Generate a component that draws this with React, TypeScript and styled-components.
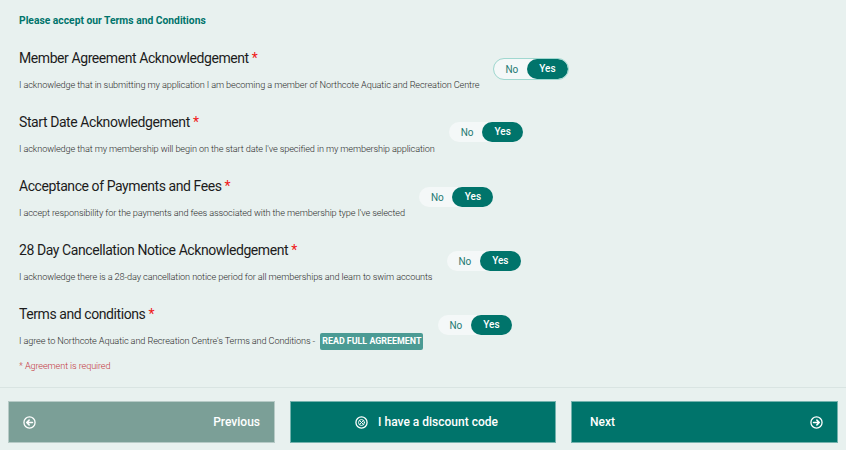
import React from "react";
import styled, { createGlobalStyle } from "styled-components";

const Global = createGlobalStyle`
  html, body { margin: 0; padding: 0; background: #e8f1ef; }
  body { font-family: Roboto, "Liberation Sans", sans-serif; overflow: hidden; }
`;
const Page = styled.div`
  width: 846px; height: 450px; display: flex; flex-direction: column; background: #e8f1ef; overflow: hidden;
`;
const Form = styled.div`
  height: 388px; box-sizing: border-box; padding: 15px 19px 0; border-bottom: 1px solid #d9e4e2;
`;
const Heading = styled.h2`
  margin: 0 0 19px; font-size: 10.3px; line-height: 12px; font-weight: 700; color: #00746b;
`;
const Row = styled.div`
  display: flex; align-items: flex-start; gap: 14.5px; height: 64px;
`;
const Text = styled.div`
  display: flex; flex-direction: column;
`;
const Title = styled.div`
  font-size: 14px; letter-spacing: -0.42px; line-height: 20px; color: #1c1c1c; height: 30px; padding-top: 2px; box-sizing: border-box;
`;
const Star = styled.span`
  color: #f01818;
`;
const Desc = styled.div`
  font-size: 9.2px; letter-spacing: -0.13px; line-height: 18px; font-weight: 300; color: #2b2b2b; display: flex; align-items: center; white-space: pre;
`;
const ReadLink = styled.a`
  margin-left: 3px; background: #4b9b94; color: #fff; font-size: 8.9px; letter-spacing: 0; font-weight: 700; line-height: 17px;
  padding: 0 2px; border-radius: 2px;
`;
const ErrorText = styled.div`
  font-size: 9.2px; letter-spacing: -0.13px; font-weight: 300; line-height: 14px; color: #c4353c; margin-top: 9px;
`;
const Toggle = styled.div<{ $outlined?: boolean; $top: number }>`
  margin-top: ${p => p.$top}px; display: flex; align-items: stretch; flex: none; width: 74px; height: 20px;
  border-radius: 10px; background: #f4f8f8; box-sizing: content-box;
  ${p => p.$outlined ? "outline: 1px solid #a0d8d0;" : ""}
`;
const No = styled.span`
  width: 33px; text-align: center; padding-left: 3px; box-sizing: border-box; font-size: 10px; line-height: 22px; color: #1f7a73;
`;
const Yes = styled.span`
  flex: 1; background: #00746b; border-radius: 10px; color: #fff; text-align: center; font-size: 10px; font-weight: 500; line-height: 19px;
`;
const Footer = styled.div`
  display: grid; grid-template-columns: 267px 266px 267px; gap: 15px; padding: 13px 8px 0 8px;
`;
const NavButton = styled.button<{ $muted?: boolean; $justify: string; $left: number }>`
  height: 42px; border: 1px solid rgba(255, 255, 255, 0.45); background: ${p => p.$muted ? "#7b9f97" : "#00746b"}; color: #fff;
  font-family: inherit; font-size: 12px; font-weight: 500; padding: 0 14px 0 ${p => p.$left}px; display: flex; align-items: center;
  justify-content: ${p => p.$justify}; box-sizing: border-box; gap: 10px;
`;
const Ic = styled.svg`
  width: 13px; height: 13px; fill: none; stroke: #fff; stroke-width: 1.4; stroke-linecap: round; stroke-linejoin: round; flex: none;
`;

const Arrow = ({ dir }: { dir: "left" | "right" }) => (
  <Ic viewBox="0 0 14 14">
    <circle cx="7" cy="7" r="6" />
    {dir === "left"
      ? <path d="M10.2 7H4M6.6 4.4 4 7l2.6 2.6" strokeWidth="1.7" />
      : <path d="M3.8 7H10M7.4 4.4 10 7 7.4 9.6" strokeWidth="1.7" />}
  </Ic>
);
const Discount = () => (
  <Ic viewBox="0 0 14 14">
    <circle cx="7" cy="7" r="6" />
    <circle cx="7" cy="7" r="3.2" strokeWidth="1" />
    <path d="M5 5l4 4M9 5 5 9" strokeWidth="1" />
  </Ic>
);

const YesNo = ({ top, outlined }: { top: number; outlined?: boolean }) => (
  <Toggle $top={top} $outlined={outlined}><No>No</No><Yes>Yes</Yes></Toggle>
);

const items = [
  { t: "Member Agreement Acknowledgement", d: "I acknowledge that in submitting my application I am becoming a member of Northcote Aquatic and Recreation Centre", top: 13, outlined: true },
  { t: "Start Date Acknowledgement", d: "I acknowledge that my membership will begin on the start date I've specified in my membership application", top: 12 },
  { t: "Acceptance of Payments and Fees", d: "I accept responsibility for the payments and fees associated with the membership type I've selected", top: 13 },
  { t: "28 Day Cancellation Notice Acknowledgement", d: "I acknowledge there is a 28-day cancellation notice period for all memberships and learn to swim accounts", top: 13 },
];

export default function App() {
  return (
    <Page>
      <Global />
      <Form>
        <Heading>Please accept our Terms and Conditions</Heading>
        {items.map(i => (
          <Row key={i.t}>
            <Text>
              <Title>{i.t} <Star>*</Star></Title>
              <Desc>{i.d}</Desc>
            </Text>
            <YesNo top={i.top} outlined={i.outlined} />
          </Row>
        ))}
        <Row>
          <Text>
            <Title>Terms and conditions <Star>*</Star></Title>
            <Desc>I agree to Northcote Aquatic and Recreation Centre's Terms and Conditions - <ReadLink>READ FULL AGREEMENT</ReadLink></Desc>
            <ErrorText>* Agreement is required</ErrorText>
          </Text>
          <YesNo top={13} />
        </Row>
      </Form>
      <Footer>
        <NavButton $muted $justify="space-between" $left={14}><Arrow dir="left" />Previous</NavButton>
        <NavButton $justify="center" $left={21}><Discount />I have a discount code</NavButton>
        <NavButton $justify="space-between" $left={18}>Next<Arrow dir="right" /></NavButton>
      </Footer>
    </Page>
  );
}
